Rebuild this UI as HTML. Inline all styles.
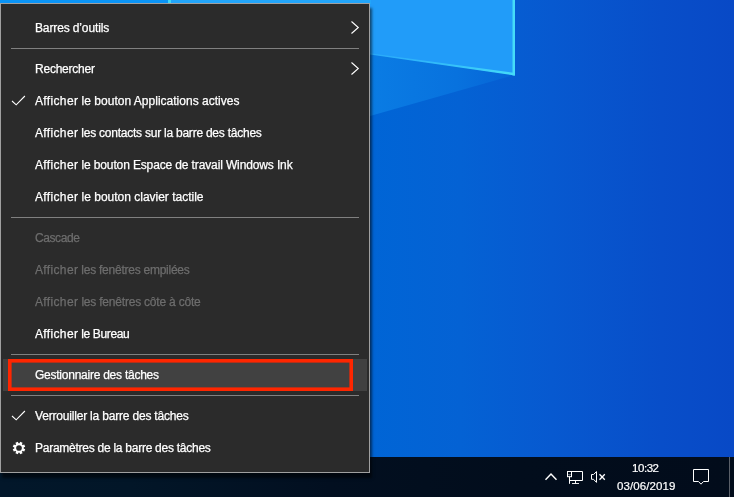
<!DOCTYPE html>
<html lang="fr">
<head>
<meta charset="utf-8">
<title>Menu contextuel de la barre des tâches</title>
<style>
html,body{margin:0;padding:0;}
body{width:734px;height:497px;overflow:hidden;position:relative;background:#0458cc;font-family:"Liberation Sans",sans-serif;}
#wall{position:absolute;left:0;top:0;width:734px;height:497px;display:block;}
#taskbar{position:absolute;left:0;top:457px;width:734px;height:40px;background:linear-gradient(90deg,#02172a 0,#021628 130px,#020f20 330px,#020d1c 520px,#020c1b 734px);}
#menu{position:absolute;left:0;top:3px;width:368px;height:468px;background:#2b2b2b;border:1px solid #a0a0a0;box-shadow:2px 5px 2.500px rgba(0,0,0,0.550);}
.it{position:absolute;left:0;width:368px;height:32px;line-height:32px;color:#fff;font-size:12px;white-space:nowrap;}
.it span{position:absolute;left:34px;top:0;will-change:transform;-webkit-text-stroke:0.25px currentColor;}
.dis{color:#6d6d6d;}
.it i{font-style:normal;letter-spacing:0.350px;}
.sep{position:absolute;left:10px;width:348px;height:1px;background:#808080;}
#hl{position:absolute;left:2px;top:355px;width:364px;height:32px;background:#414141;}
.clk{will-change:transform;position:absolute;color:#fff;font-size:11.5px;line-height:14px;white-space:nowrap;-webkit-text-stroke:0.2px #fff;}
</style>
</head>
<body>
<svg id="wall" width="734" height="497" viewBox="0 0 734 497">
  <defs>
    <linearGradient id="bg" gradientUnits="userSpaceOnUse" x1="370" y1="0" x2="734" y2="0">
      <stop offset="0" stop-color="#0065d6"/>
      <stop offset="0.250" stop-color="#0462d4"/>
      <stop offset="0.500" stop-color="#0759d0"/>
      <stop offset="0.800" stop-color="#084ec9"/>
      <stop offset="1" stop-color="#0849c6"/>
    </linearGradient>
    <linearGradient id="beam" gradientUnits="userSpaceOnUse" x1="370" y1="0" x2="515" y2="0">
      <stop offset="0" stop-color="#0a7ce4"/>
      <stop offset="0.600" stop-color="#0872de"/>
      <stop offset="1" stop-color="#0664d6"/>
    </linearGradient>
    <linearGradient id="edge" gradientUnits="userSpaceOnUse" x1="370" y1="0" x2="515" y2="0">
      <stop offset="0" stop-color="#29a9fa"/>
      <stop offset="0.500" stop-color="#33bdf9"/>
      <stop offset="1" stop-color="#45dcf8"/>
    </linearGradient>
  </defs>
  <rect x="0" y="0" width="734" height="497" fill="url(#bg)"/>
  <polygon points="370,54 514,75 370,116" fill="url(#beam)"/>
  <polygon points="0,0 515,0 515,75 370,54 0,10" fill="#219cf9"/>
  <rect x="0" y="0" width="168" height="4" fill="#0a94f6"/>
  <rect x="168" y="0" width="3" height="4" fill="#40d8f8"/>
  <rect x="171" y="0" width="200" height="4" fill="#22a5fa"/>
  <polygon points="370,53.300 515,73 515,75.500 370,54.500" fill="url(#edge)"/>
  <rect x="512.500" y="0" width="2.500" height="75.500" fill="#45dcf8"/>
</svg>

<div id="taskbar"></div>

<div id="menu">
  <div class="it" style="top:8px"><span style="letter-spacing:-0.129px">Barres d’outils</span></div>
  <div class="sep" style="top:44px"></div>
  <div class="it" style="top:49px"><span style="letter-spacing:-0.223px">Rechercher</span></div>
  <div class="it" style="top:81px"><span style="letter-spacing:0.015px"><i>Afficher</i> le bouton Applications actives</span></div>
  <div class="it" style="top:113px"><span style="letter-spacing:-0.237px"><i>Afficher</i> les contacts sur la barre des tâches</span></div>
  <div class="it" style="top:145px"><span style="letter-spacing:-0.13px"><i>Afficher</i> le bouton Espace de travail Windows Ink</span></div>
  <div class="it" style="top:177px"><span style="letter-spacing:-0.007px"><i>Afficher</i> le bouton clavier tactile</span></div>
  <div class="sep" style="top:213px"></div>
  <div class="it dis" style="top:218px"><span style="letter-spacing:-0.411px">Cascade</span></div>
  <div class="it dis" style="top:250px"><span style="letter-spacing:-0.25px"><i>Afficher</i> les fenêtres empilées</span></div>
  <div class="it dis" style="top:282px"><span style="letter-spacing:-0.207px"><i>Afficher</i> les fenêtres côte à côte</span></div>
  <div class="it" style="top:314px"><span style="letter-spacing:-0.367px"><i>Afficher</i> le Bureau</span></div>
  <div class="sep" style="top:350px"></div>
  <div id="hl"></div>
    <div class="it" style="top:355px"><span style="letter-spacing:-0.245px">Gestionnaire des tâches</span></div>
  <div class="sep" style="top:391px"></div>
  <div class="it" style="top:396px"><span style="letter-spacing:-0.188px">Verrouiller la barre des tâches</span></div>
  <div class="it" style="top:428px"><span style="letter-spacing:-0.258px">Paramètres de la barre des tâches</span></div>
</div>


<svg id="icons" width="734" height="497" viewBox="0 0 734 497" style="position:absolute;left:0;top:0;pointer-events:none">
  <g fill="none" stroke="#ffffff" stroke-width="1.1" stroke-linecap="butt" stroke-linejoin="miter">
    <!-- submenu chevrons -->
    <polyline points="351.500,21.500 358.300,27.500 351.500,33.500"/>
    <polyline points="351.500,62.500 358.300,68.500 351.500,74.500"/>
    <!-- check marks -->
    <polyline points="12,101 16.200,104.800 24.900,96"/>
    <polyline points="12,416 16.200,419.800 24.900,411"/>
  </g>
  <!-- red highlight rectangle -->
  <rect x="9.800" y="360.800" width="341.400" height="28.400" fill="none" stroke="#ff2600" stroke-width="3.600"/>
  <!-- gear -->
  <g transform="translate(19,448)" fill="#ffffff">
    <g id="teeth">
      <rect x="-1.300" y="-6.200" width="2.600" height="3" transform="rotate(22.500)"/>
      <rect x="-1.300" y="-6.200" width="2.600" height="3" transform="rotate(67.500)"/>
      <rect x="-1.300" y="-6.200" width="2.600" height="3" transform="rotate(112.500)"/>
      <rect x="-1.300" y="-6.200" width="2.600" height="3" transform="rotate(157.500)"/>
      <rect x="-1.300" y="-6.200" width="2.600" height="3" transform="rotate(202.500)"/>
      <rect x="-1.300" y="-6.200" width="2.600" height="3" transform="rotate(247.500)"/>
      <rect x="-1.300" y="-6.200" width="2.600" height="3" transform="rotate(292.500)"/>
      <rect x="-1.300" y="-6.200" width="2.600" height="3" transform="rotate(337.500)"/>
    </g>
    <circle r="3.800" fill="none" stroke="#ffffff" stroke-width="1.900"/>
  </g>
  <!-- tray: chevron up -->
  <polyline points="545.500,479.800 551,474 556.500,479.800" fill="none" stroke="#ffffff" stroke-width="1.400"/>
  <!-- tray: network -->
  <g fill="none" stroke="#ffffff" stroke-width="1">
    <polyline points="569.500,480.500 582.500,480.500 582.500,471.500 567.500,471.500"/>
    <rect x="567.500" y="471.500" width="4" height="5.200"/>
    <polyline points="568.600,474.200 569.500,475.200 570.400,474.200" stroke-width="0.700"/>
    <line x1="569.500" y1="476.500" x2="569.500" y2="483.800"/>
    <line x1="575.500" y1="480.500" x2="575.500" y2="483.500"/>
    <line x1="572" y1="483.500" x2="579" y2="483.500" stroke-opacity="0.9"/>
  </g>
  <!-- tray: volume muted -->
  <g fill="none" stroke="#ffffff" stroke-width="1">
    <polygon points="591.500,474.500 593.500,474.500 596.500,471.600 596.500,482.400 593.500,479.300 591.500,479.300"/>
    <line x1="599.500" y1="474.300" x2="604.800" y2="479.700" stroke-width="1.300"/>
    <line x1="604.800" y1="474.300" x2="599.500" y2="479.700" stroke-width="1.300"/>
  </g>
  <!-- tray: notification -->
  <path d="M693.500,469.500 H708.500 V481.500 H703.500 L701,484.200 L698.500,481.500 H693.500 Z" fill="none" stroke="#ffffff" stroke-width="1"/>
  <!-- show desktop divider -->
  <rect x="729" y="457" width="1" height="40" fill="#5a5f68"/>
</svg>

<div class="clk" style="left:632px;top:460.500px;letter-spacing:-0.450px">10:32</div>
<div class="clk" style="left:616.800px;top:478.500px;letter-spacing:0.080px">03/06/2019</div>
</body>
</html>
